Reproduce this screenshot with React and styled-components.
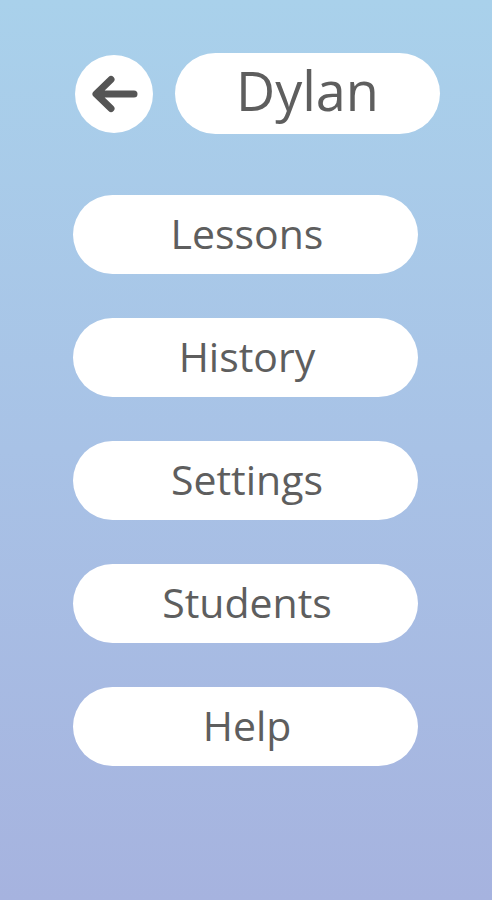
import React from 'react'
import styled, { createGlobalStyle } from 'styled-components'

const GlobalStyle = createGlobalStyle`
  html, body {
    margin: 0;
    padding: 0;
  }
  body {
    font-family: "Open Sans", "Noto Sans", sans-serif;
  }
`

const Page = styled.div`
  min-height: 100vh;
  box-sizing: border-box;
  padding-top: 53px;
  background: linear-gradient(180deg, #a9d1eb 0%, #a8c2e6 50%, #a6b3df 100%);
`

const TopRow = styled.div`
  display: flex;
  align-items: center;
  gap: 22px;
  padding-left: 75px;
`

const BackButton = styled.button`
  width: 78px;
  height: 78px;
  border: none;
  border-radius: 50%;
  background: #fff;
  display: flex;
  align-items: center;
  justify-content: center;
  padding: 0;
  cursor: pointer;
`

const NamePill = styled.div`
  width: 265px;
  height: 81px;
  border-radius: 41px;
  background: #fff;
  display: flex;
  align-items: center;
  justify-content: center;
  padding-bottom: 8px;
  box-sizing: border-box;
  color: #5e5e5e;
  font-size: 54px;
`

const Menu = styled.div`
  display: flex;
  flex-direction: column;
  gap: 44px;
  margin-top: 61px;
  padding-left: 73px;
`

const MenuButton = styled.button`
  width: 345px;
  height: 79px;
  border: none;
  border-radius: 40px;
  background: #fff;
  color: #5e5e5e;
  font-family: "Open Sans", "Noto Sans", sans-serif;
  font-size: 41px;
  display: flex;
  align-items: center;
  justify-content: center;
  padding: 0 0 3px 3px;
  cursor: pointer;
`

const items = ['Lessons', 'History', 'Settings', 'Students', 'Help']

const App = () => {
  return (
    <>
      <GlobalStyle />
      <Page>
        <TopRow>
          <BackButton>
            <svg width="48" height="40" viewBox="0 0 48 40">
              <path
                d="M44 20H7M21 5.5L6 20L21 34.5"
                fill="none"
                stroke="#555"
                strokeWidth="7"
                strokeLinecap="round"
                strokeLinejoin="round"
              />
            </svg>
          </BackButton>
          <NamePill>Dylan</NamePill>
        </TopRow>
        <Menu>
          {items.map(item => (
            <MenuButton key={item}>{item}</MenuButton>
          ))}
        </Menu>
      </Page>
    </>
  )
}

export default App
